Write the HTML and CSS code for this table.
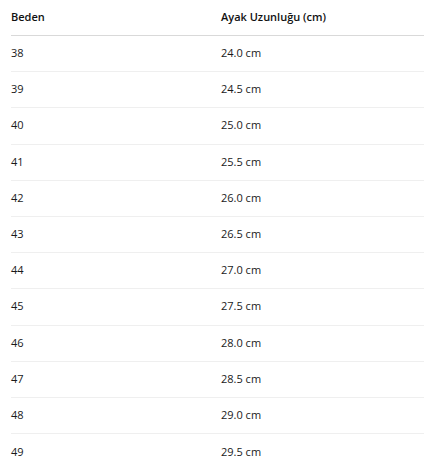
FILE: index.html
```
<!DOCTYPE html>
<html lang="tr">
<head>
<meta charset="utf-8">
<title>Beden Tablosu</title>
<link rel="stylesheet" href="styles.css">
</head>
<body>
<div class="size-table">
  <div class="row head"><div class="c1">Beden</div><div class="c2">Ayak Uzunluğu (cm)</div></div>
  <div class="row"><div class="c1">38</div><div class="c2">24.0 cm</div></div>
  <div class="row"><div class="c1">39</div><div class="c2">24.5 cm</div></div>
  <div class="row"><div class="c1">40</div><div class="c2">25.0 cm</div></div>
  <div class="row"><div class="c1">41</div><div class="c2">25.5 cm</div></div>
  <div class="row"><div class="c1">42</div><div class="c2">26.0 cm</div></div>
  <div class="row"><div class="c1">43</div><div class="c2">26.5 cm</div></div>
  <div class="row"><div class="c1">44</div><div class="c2">27.0 cm</div></div>
  <div class="row"><div class="c1">45</div><div class="c2">27.5 cm</div></div>
  <div class="row"><div class="c1">46</div><div class="c2">28.0 cm</div></div>
  <div class="row"><div class="c1">47</div><div class="c2">28.5 cm</div></div>
  <div class="row"><div class="c1">48</div><div class="c2">29.0 cm</div></div>
  <div class="row last"><div class="c1">49</div><div class="c2">29.5 cm</div></div>
</div>
</body>
</html>
```
FILE: styles.css
```
html, body {
  margin: 0;
  padding: 0;
  background: #fff;
}
body {
  font-family: "Open Sans", "Noto Sans", sans-serif;
  font-size: 11px;
  color: #1a1a1a;
  overflow: hidden;
}
.size-table {
  margin-left: 11px;
  width: 413px;
}
.row {
  display: flex;
  align-items: center;
  height: 36.2px;
  box-sizing: border-box;
  padding-bottom: 2px;
  border-bottom: 1px solid #efefef;
}
.row.head {
  height: 36px;
  border-bottom: 1px solid #d9d9d9;
  font-weight: 600;
  color: #111;
}
.row.last {
  border-bottom: none;
}
.c1 {
  width: 210px;
  flex: none;
}
.c2 {
  flex: 1;
}
```
